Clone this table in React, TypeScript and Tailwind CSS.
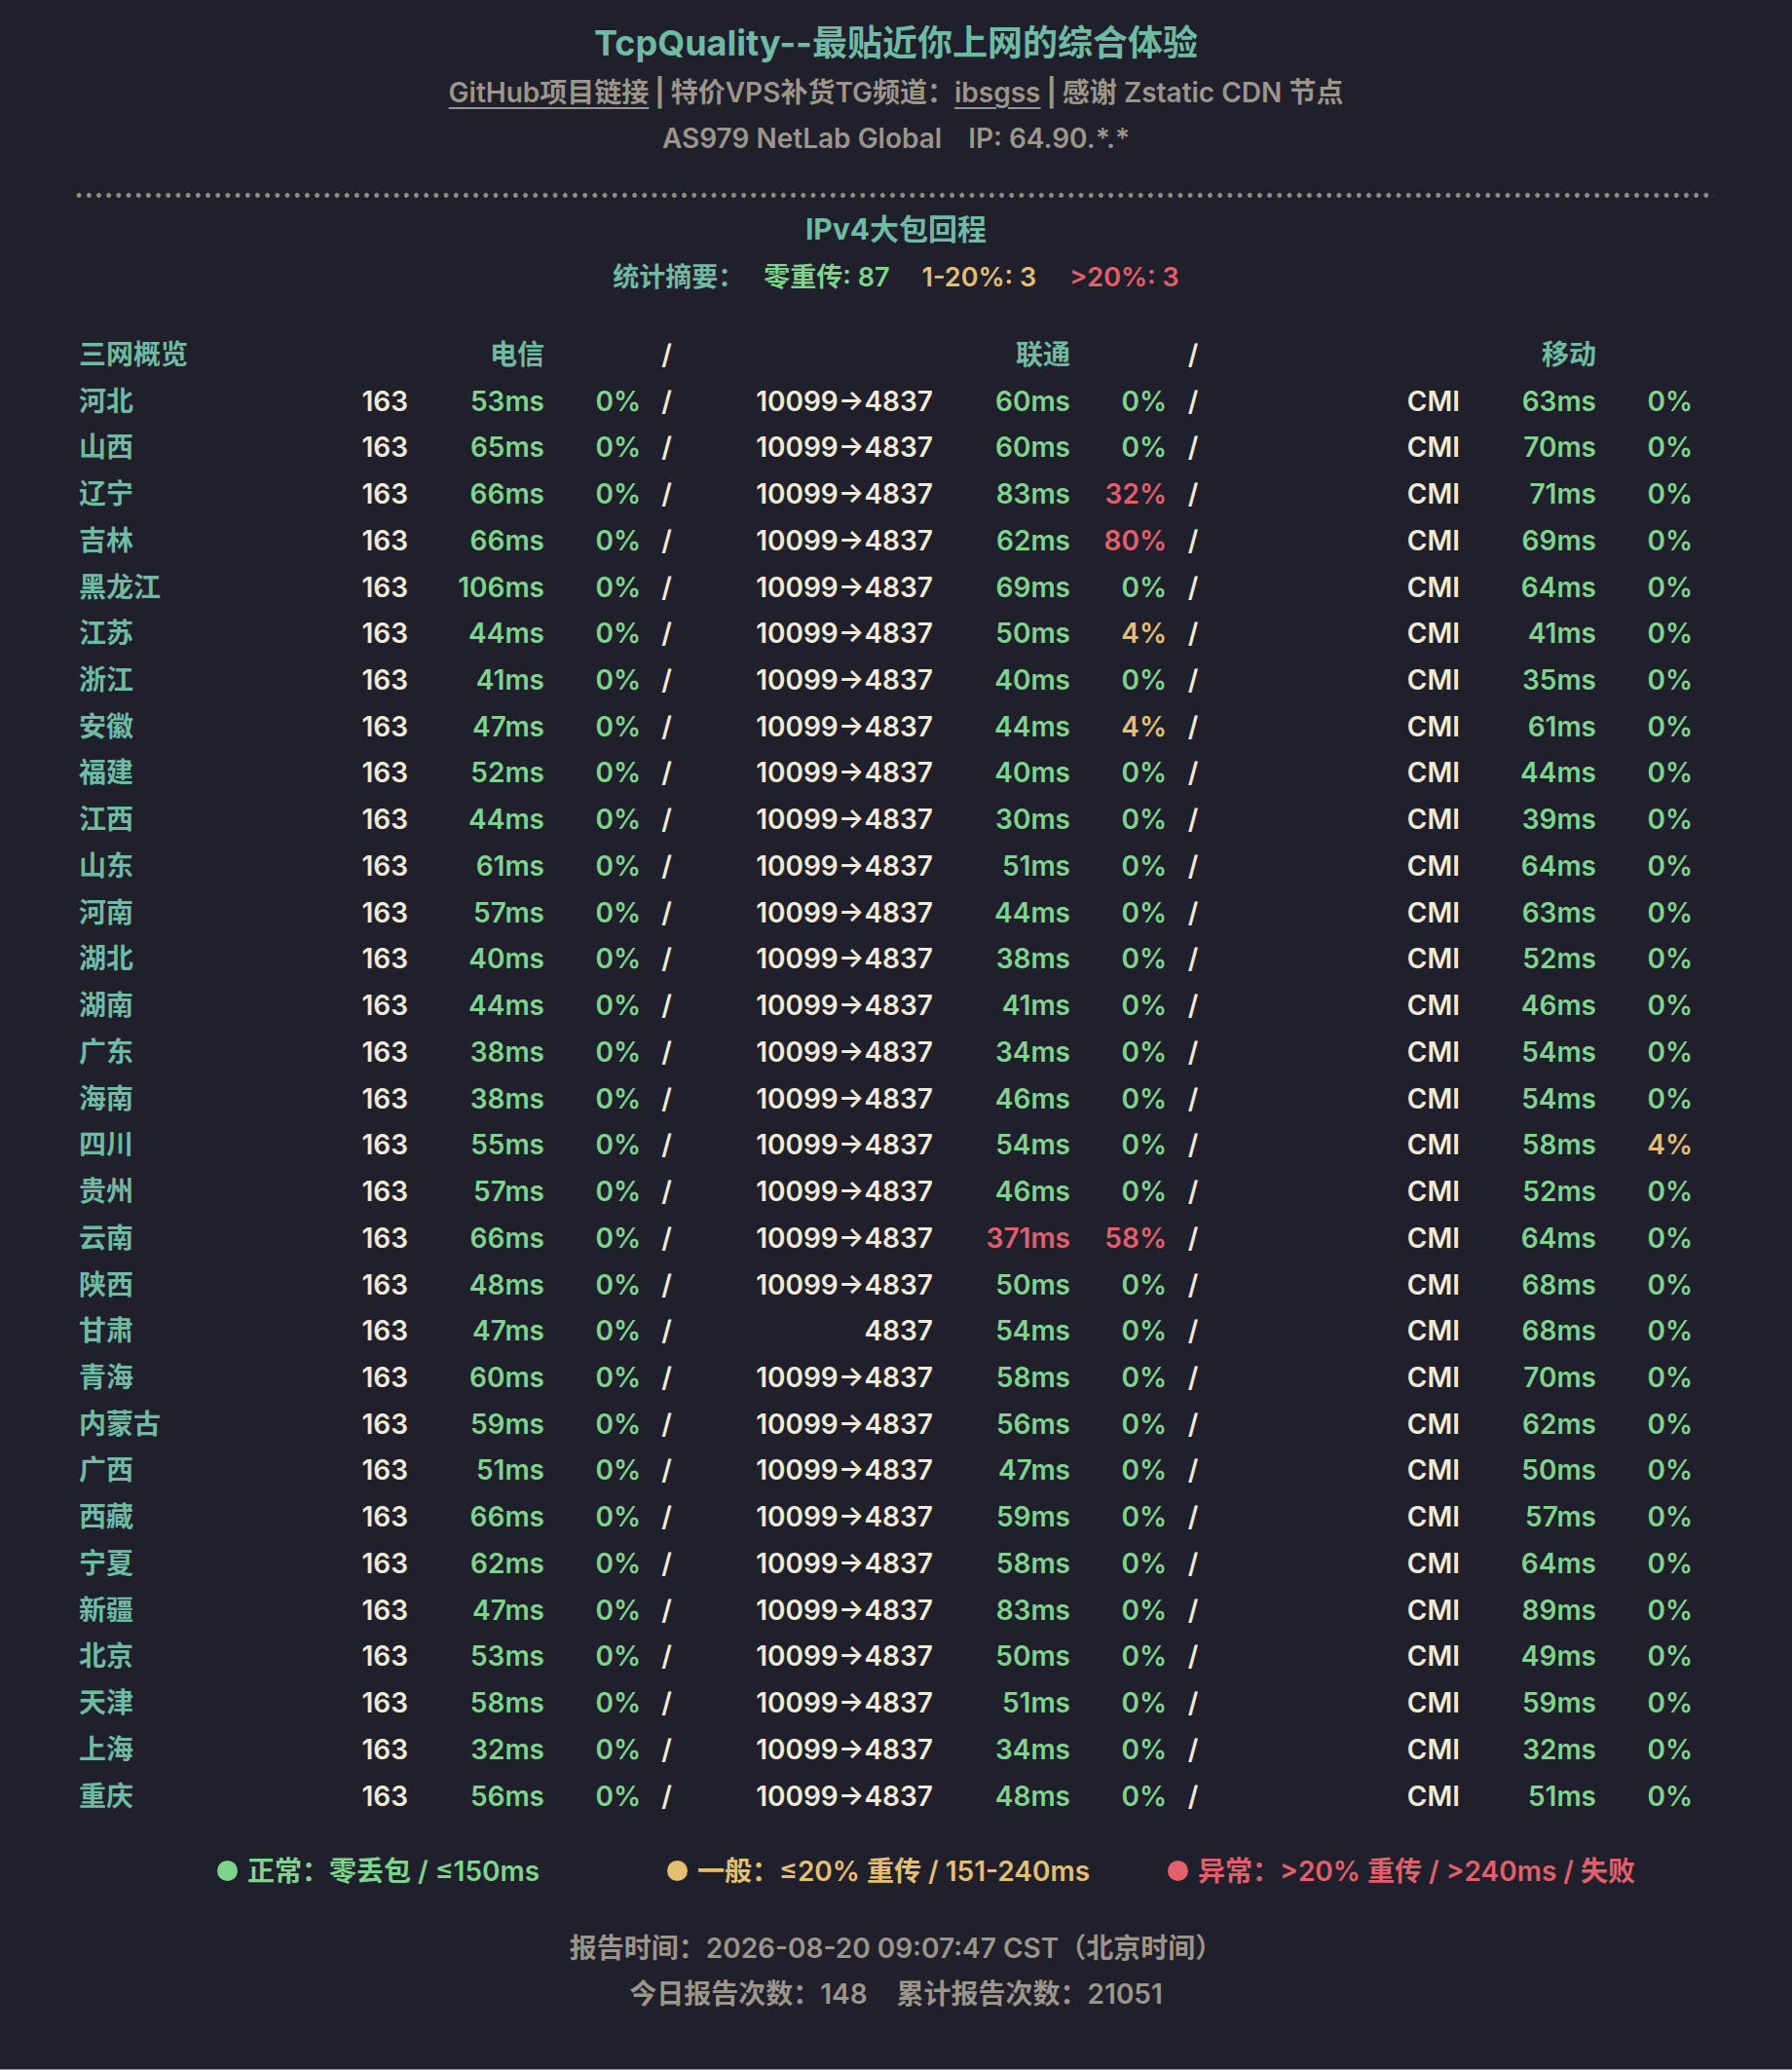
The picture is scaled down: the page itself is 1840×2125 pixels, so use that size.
const font = "font-['Inter','Noto_Sans_CJK_SC',sans-serif]";

type Row = [string, string, number, number, string, number, number, string, number, number];

const rows: Row[] = [
  ["河北", "163", 53, 0, "10099→4837", 60, 0, "CMI", 63, 0],
  ["山西", "163", 65, 0, "10099→4837", 60, 0, "CMI", 70, 0],
  ["辽宁", "163", 66, 0, "10099→4837", 83, 32, "CMI", 71, 0],
  ["吉林", "163", 66, 0, "10099→4837", 62, 80, "CMI", 69, 0],
  ["黑龙江", "163", 106, 0, "10099→4837", 69, 0, "CMI", 64, 0],
  ["江苏", "163", 44, 0, "10099→4837", 50, 4, "CMI", 41, 0],
  ["浙江", "163", 41, 0, "10099→4837", 40, 0, "CMI", 35, 0],
  ["安徽", "163", 47, 0, "10099→4837", 44, 4, "CMI", 61, 0],
  ["福建", "163", 52, 0, "10099→4837", 40, 0, "CMI", 44, 0],
  ["江西", "163", 44, 0, "10099→4837", 30, 0, "CMI", 39, 0],
  ["山东", "163", 61, 0, "10099→4837", 51, 0, "CMI", 64, 0],
  ["河南", "163", 57, 0, "10099→4837", 44, 0, "CMI", 63, 0],
  ["湖北", "163", 40, 0, "10099→4837", 38, 0, "CMI", 52, 0],
  ["湖南", "163", 44, 0, "10099→4837", 41, 0, "CMI", 46, 0],
  ["广东", "163", 38, 0, "10099→4837", 34, 0, "CMI", 54, 0],
  ["海南", "163", 38, 0, "10099→4837", 46, 0, "CMI", 54, 0],
  ["四川", "163", 55, 0, "10099→4837", 54, 0, "CMI", 58, 4],
  ["贵州", "163", 57, 0, "10099→4837", 46, 0, "CMI", 52, 0],
  ["云南", "163", 66, 0, "10099→4837", 371, 58, "CMI", 64, 0],
  ["陕西", "163", 48, 0, "10099→4837", 50, 0, "CMI", 68, 0],
  ["甘肃", "163", 47, 0, "4837", 54, 0, "CMI", 68, 0],
  ["青海", "163", 60, 0, "10099→4837", 58, 0, "CMI", 70, 0],
  ["内蒙古", "163", 59, 0, "10099→4837", 56, 0, "CMI", 62, 0],
  ["广西", "163", 51, 0, "10099→4837", 47, 0, "CMI", 50, 0],
  ["西藏", "163", 66, 0, "10099→4837", 59, 0, "CMI", 57, 0],
  ["宁夏", "163", 62, 0, "10099→4837", 58, 0, "CMI", 64, 0],
  ["新疆", "163", 47, 0, "10099→4837", 83, 0, "CMI", 89, 0],
  ["北京", "163", 53, 0, "10099→4837", 50, 0, "CMI", 49, 0],
  ["天津", "163", 58, 0, "10099→4837", 51, 0, "CMI", 59, 0],
  ["上海", "163", 32, 0, "10099→4837", 34, 0, "CMI", 32, 0],
  ["重庆", "163", 56, 0, "10099→4837", 48, 0, "CMI", 51, 0],
];

const green = "text-[#7fd48c]";
const yellow = "text-[#e4bf72]";
const red = "text-[#e2606b]";
const teal = "text-[#6fbaa2]";
const cream = "text-[#f1ead7]";
const gray = "text-[#9c968a]";

function msTone(ms: number) {
  if (ms > 240) return red;
  if (ms > 150) return yellow;
  return green;
}

function lossTone(loss: number) {
  if (loss > 20) return red;
  if (loss > 0) return yellow;
  return green;
}

function Carrier({ as, ms, loss }: { as: string; ms: number; loss: number }) {
  return (
    <>
      <span className={`whitespace-nowrap text-right ${cream}`}>{as}</span>
      <span className={`text-right ${msTone(ms)}`}>{ms}ms</span>
      <span className={`text-right ${lossTone(loss)}`}>{loss}%</span>
    </>
  );
}

function Slash() {
  return <span className={`text-center ${cream}`}>/</span>;
}

export default function App() {
  return (
    <div className={`flex min-h-[2125px] flex-col bg-[#201f2c] ${font}`}>
      <div className="px-[80px] pt-[19px]">
        <h1 className={`text-center text-[36px] leading-[50px] font-bold ${teal}`}>
          TcpQuality--最贴近你上网的综合体验
        </h1>

        <p className={`mt-[4px] text-center text-[28px] leading-[44px] font-semibold ${gray}`}>
          <span className="underline decoration-2 underline-offset-[5px]">GitHub项目链接</span>
          <span className="mx-[6px] font-bold">|</span>
          特价VPS补货TG频道：
          <span className="underline decoration-2 underline-offset-[5px]">ibsgss</span>
          <span className="mx-[6px] font-bold">|</span>
          感谢 Zstatic CDN 节点
        </p>

        <p className={`mt-[2.5px] text-center text-[28px] leading-[44px] font-semibold ${gray}`}>
          AS979 NetLab Global
          <span className="ml-[27px]">IP: 64.90.*.*</span>
        </p>

        <div className="-ml-[4px] mt-[34px] h-[5px] bg-[radial-gradient(circle,#8f8a7f_2.2px,transparent_2.6px)] bg-[length:10.2px_5px] bg-repeat-x" />

        <h2 className={`mt-[10.5px] text-center text-[30px] leading-[44px] font-bold ${teal}`}>
          IPv4大包回程
        </h2>

        <p className="mt-[6px] flex justify-center text-[27px] leading-[44px] font-semibold">
          <span className={teal}>统计摘要：</span>
          <span className={`ml-[20px] ${green}`}>零重传: 87</span>
          <span className={`ml-[33px] ${yellow}`}>1-20%: 3</span>
          <span className={`ml-[34px] ${red}`}>&gt;20%: 3</span>
        </p>

        <div className="mt-[33px] grid grid-cols-[259px_80px_140px_99px_53px_247px_141px_99px_54px_247px_140px_99px] auto-rows-[47.74px] items-center text-[28px] font-semibold">
          <span className={`pl-px ${teal}`}>三网概览</span>
          <span />
          <span className={`text-right ${teal}`}>电信</span>
          <span />
          <Slash />
          <span />
          <span className={`text-right ${teal}`}>联通</span>
          <span />
          <Slash />
          <span />
          <span className={`text-right ${teal}`}>移动</span>
          <span />

          {rows.map((r) => (
            <div key={r[0]} className="contents">
              <span className={`pl-px ${teal}`}>{r[0]}</span>
              <Carrier as={r[1]} ms={r[2]} loss={r[3]} />
              <Slash />
              <Carrier as={r[4]} ms={r[5]} loss={r[6]} />
              <Slash />
              <Carrier as={r[7]} ms={r[8]} loss={r[9]} />
            </div>
          ))}
        </div>

        <div className="mt-[31px] flex items-center pl-[143px] text-[28px] leading-[44px] font-semibold">
          <span className={`flex items-center gap-[10px] ${green}`}>
            <span className="h-[21px] w-[21px] rounded-full bg-[#7fd48c]" />
            正常：零丢包 / ≤150ms
          </span>
          <span className={`ml-[131px] flex items-center gap-[10px] ${yellow}`}>
            <span className="h-[21px] w-[21px] rounded-full bg-[#e4bf72]" />
            一般：≤20% 重传 / 151-240ms
          </span>
          <span className={`ml-[80px] flex items-center gap-[10px] ${red}`}>
            <span className="h-[21px] w-[21px] rounded-full bg-[#e2606b]" />
            异常：&gt;20% 重传 / &gt;240ms / 失败
          </span>
        </div>

        <p className={`mt-[35px] text-center text-[28px] leading-[44px] font-semibold ${gray}`}>
          报告时间：2026-08-20 09:07:47 CST（北京时间）
        </p>
        <p className={`mt-[3.5px] text-center text-[28px] leading-[44px] font-semibold ${gray}`}>
          今日报告次数：148
          <span className="ml-[30px]">累计报告次数：21051</span>
        </p>
      </div>

      <div className="mt-auto h-px bg-[#9a9a9a]" />
    </div>
  );
}
